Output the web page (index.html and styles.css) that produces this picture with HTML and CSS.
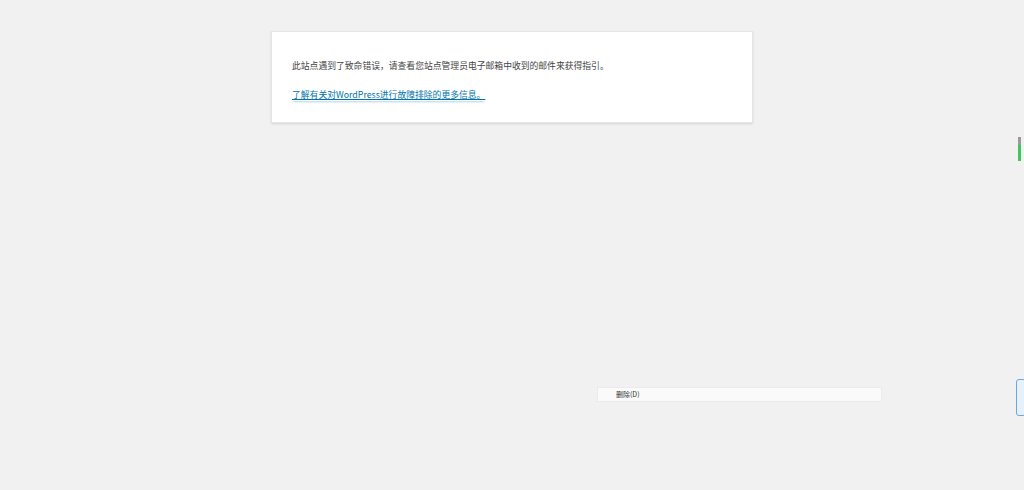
FILE: index.html
```html
<!DOCTYPE html>
<html lang="zh-CN">
<head>
<meta charset="utf-8">
<title>WordPress › 错误</title>
<link rel="stylesheet" href="styles.css">
</head>
<body>
<div class="error-page">
  <p class="message">此站点遇到了致命错误，请查看您站点管理员电子邮箱中收到的邮件来获得指引。</p>
  <p class="message"><a class="more" href="#">了解有关对WordPress进行故障排除的更多信息。</a></p>
</div>
<div class="ctx-menu"><span class="ctx-item">删除(D)</span></div>
<div class="side-mark"></div>
<div class="side-handle"></div>
</body>
</html>
```
FILE: styles.css
```css
html, body {
  margin: 0;
  padding: 0;
  background: #f1f1f1;
  height: 100%;
}
body {
  font-family: "Noto Sans CJK SC", "Noto Sans", "Liberation Sans", sans-serif;
  color: #444;
  overflow: hidden;
}
.error-page {
  box-sizing: border-box;
  width: 482px;
  margin: 31px auto 0;
  padding: 27px 20px 20px;
  background: #fff;
  box-shadow: 0 1px 2px rgba(0,0,0,0.12);
  border: 1px solid #e6e6e6;
}
.message {
  margin: 0;
  font-size: 8.8px;
  line-height: 14px;
}
.message + .message {
  margin-top: 15px;
}
.more {
  color: #0073aa;
  text-decoration: underline;
  box-shadow: 0 2px 2px -1px rgba(30,140,190,0.35);
}
.ctx-menu {
  position: absolute;
  left: 597px;
  top: 387px;
  width: 285px;
  height: 15px;
  box-sizing: border-box;
  background: #fafafa;
  border: 1px solid #ebebeb;
  display: flex;
  align-items: center;
  padding-left: 18px;
}
.ctx-item {
  font-size: 7px;
  line-height: 1;
  color: #333;
}
.side-mark {
  position: absolute;
  left: 1018px;
  top: 137px;
  width: 3px;
  height: 24px;
  background: linear-gradient(#9a9a9a 0 35%, #3cc85a 35% 100%);
}
.side-handle {
  position: absolute;
  left: 1016px;
  top: 379px;
  width: 10px;
  height: 37px;
  box-sizing: border-box;
  border: 1px solid #6aa8e0;
  border-radius: 3px;
  background: #e6f1fb;
}
```
